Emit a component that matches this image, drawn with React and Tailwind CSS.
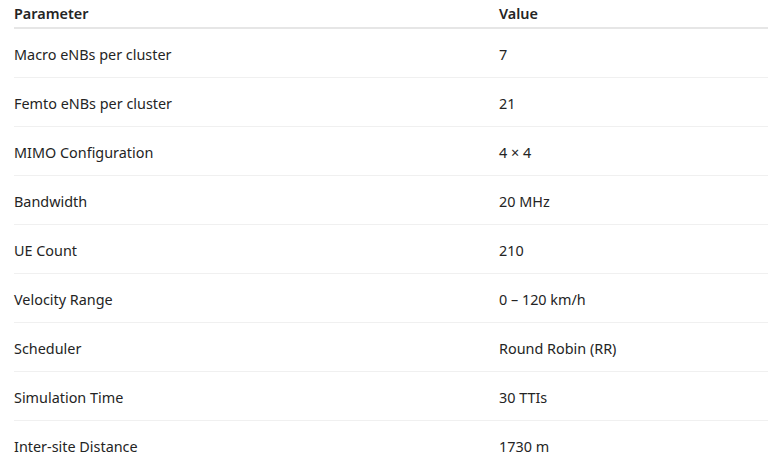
const rows = [
  ["Macro eNBs per cluster", "7"],
  ["Femto eNBs per cluster", "21"],
  ["MIMO Configuration", "4 × 4"],
  ["Bandwidth", "20 MHz"],
  ["UE Count", "210"],
  ["Velocity Range", "0 – 120 km/h"],
  ["Scheduler", "Round Robin (RR)"],
  ["Simulation Time", "30 TTIs"],
  ["Inter-site Distance", "1730 m"],
];

export default function App() {
  return (
    <div className="w-[768px] h-[475px] bg-white pl-[14px] overflow-hidden text-[#242424] text-[14.4px] font-['Noto_Sans',sans-serif]">
      <div className="grid grid-cols-[485px_1fr] h-[29px] items-center border-b-2 border-[#e6e6e6] font-semibold">
        <div>Parameter</div>
        <div>Value</div>
      </div>
      {rows.map(([p, v], i) => (
        <div
          key={p}
          className={
            "grid grid-cols-[485px_1fr] h-[49px] pt-[3px] items-center " +
            (i < rows.length - 1 ? "border-b border-[#f0f0f0]" : "")
          }
        >
          <div>{p}</div>
          <div>{v}</div>
        </div>
      ))}
    </div>
  );
}
